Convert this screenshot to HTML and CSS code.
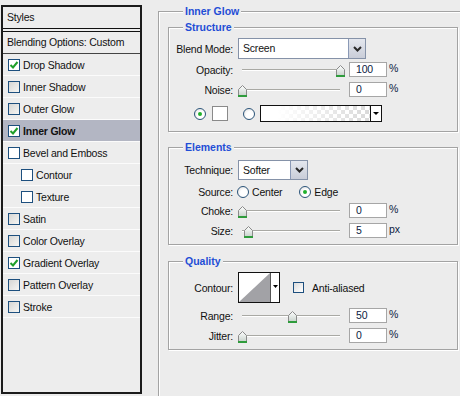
FILE: index.html
```html
<!DOCTYPE html>
<html lang="en">
<head>
    <meta charset="UTF-8">
    <title>Layer Style - Inner Glow</title>
    <link rel="stylesheet" href="styles.css">
</head>
<body>
    <svg width="0" height="0" class="defs">
        <defs>
            <linearGradient id="thumbFill" x1="0" y1="0" x2="0" y2="1">
                <stop offset="0" stop-color="#ffffff"/>
                <stop offset="1" stop-color="#c9d3cd"/>
            </linearGradient>
            <symbol id="thumb" viewBox="0 0 9 12">
                <polygon points="0.5,4.5 4.5,0.5 8.5,4.5 8.5,10.5 0.5,10.5" fill="url(#thumbFill)" stroke="#8a8a8a"/>
                <rect x="0" y="10" width="9" height="2" fill="#2f9c3c"/>
            </symbol>
        </defs>
    </svg>
    <div class="dialog">
        <div class="styles-panel">
            <div class="panel-head">Styles</div>
            <div class="blend-row">Blending Options: Custom</div>
            <ul class="fx-list">
                <li><span class="check on"><svg width="10" height="10" viewBox="0 0 10 10"><path d="M1.5 5 L4 7.5 L8.5 2" fill="none" stroke="#1f9f2a" stroke-width="2"/></svg></span>Drop Shadow</li>
                <li><span class="check dim"></span>Inner Shadow</li>
                <li><span class="check dim"></span>Outer Glow</li>
                <li class="active"><span class="check on"><svg width="10" height="10" viewBox="0 0 10 10"><path d="M1.5 5 L4 7.5 L8.5 2" fill="none" stroke="#1f9f2a" stroke-width="2"/></svg></span>Inner Glow</li>
                <li><span class="check"></span>Bevel and Emboss</li>
                <li class="sub"><span class="check"></span>Contour</li>
                <li class="sub"><span class="check"></span>Texture</li>
                <li><span class="check dim"></span>Satin</li>
                <li><span class="check dim"></span>Color Overlay</li>
                <li><span class="check on"><svg width="10" height="10" viewBox="0 0 10 10"><path d="M1.5 5 L4 7.5 L8.5 2" fill="none" stroke="#1f9f2a" stroke-width="2"/></svg></span>Gradient Overlay</li>
                <li><span class="check dim"></span>Pattern Overlay</li>
                <li><span class="check dim"></span>Stroke</li>
            </ul>
        </div>

        <div class="options">
            <div class="group outer">
                <div class="group-title">Inner Glow</div>

                <div class="group structure">
                    <div class="group-title">Structure</div>
                    <div class="row row-select">
                        <span class="lbl">Blend Mode:</span>
                        <div class="select wide"><span class="select-text">Screen</span><span class="select-btn"><svg width="9" height="6" viewBox="0 0 9 6"><path d="M1 1 L4.5 4.5 L8 1" fill="none" stroke="#2a2a2a" stroke-width="2"/></svg></span></div>
                    </div>
                    <div class="row row-field first">
                        <span class="lbl">Opacity:</span>
                        <div class="slider"><div class="track"></div><svg class="thumb" style="left: 98px"><use href="#thumb"/></svg></div>
                        <span class="num">100</span><span class="unit">%</span>
                    </div>
                    <div class="row row-field">
                        <span class="lbl">Noise:</span>
                        <div class="slider"><div class="track"></div><svg class="thumb" style="left: 0px"><use href="#thumb"/></svg></div>
                        <span class="num">0</span><span class="unit">%</span>
                    </div>
                    <div class="row row-color">
                        <span class="radio on"></span>
                        <span class="swatch"></span>
                        <span class="radio second"></span>
                        <div class="gradient"><span class="gradient-fill"></span><span class="mini-btn"><span class="tri"></span></span></div>
                    </div>
                </div>

                <div class="group elements">
                    <div class="group-title">Elements</div>
                    <div class="row row-select tech">
                        <span class="lbl">Technique:</span>
                        <div class="select narrow"><span class="select-text">Softer</span><span class="select-btn"><svg width="9" height="6" viewBox="0 0 9 6"><path d="M1 1 L4.5 4.5 L8 1" fill="none" stroke="#2a2a2a" stroke-width="2"/></svg></span></div>
                    </div>
                    <div class="row row-source">
                        <span class="lbl">Source:</span>
                        <span class="radio"></span><span class="opt">Center</span>
                        <span class="radio on edge"></span><span class="opt">Edge</span>
                    </div>
                    <div class="row row-field">
                        <span class="lbl">Choke:</span>
                        <div class="slider"><div class="track"></div><svg class="thumb" style="left: 0px"><use href="#thumb"/></svg></div>
                        <span class="num">0</span><span class="unit">%</span>
                    </div>
                    <div class="row row-field">
                        <span class="lbl">Size:</span>
                        <div class="slider"><div class="track"></div><svg class="thumb" style="left: 6px"><use href="#thumb"/></svg></div>
                        <span class="num">5</span><span class="unit">px</span>
                    </div>
                </div>

                <div class="group quality">
                    <div class="group-title">Quality</div>
                    <div class="row row-contour">
                        <span class="lbl">Contour:</span>
                        <div class="contour">
                            <svg width="40" height="29" viewBox="0 0 40 29">
                                <rect x="0" y="0" width="31" height="29" fill="#fff"/>
                                <polygon points="0,29 31,0 31,29" fill="#a2a2a6"/>
                                <line x1="31.5" y1="0" x2="31.5" y2="29" stroke="#555" stroke-width="1"/>
                                <polygon points="34,12 39,12 36.5,15" fill="#000"/>
                            </svg>
                        </div>
                        <span class="check aa"></span><span class="opt">Anti-aliased</span>
                    </div>
                    <div class="row row-field">
                        <span class="lbl">Range:</span>
                        <div class="slider"><div class="track"></div><svg class="thumb" style="left: 50px"><use href="#thumb"/></svg></div>
                        <span class="num">50</span><span class="unit">%</span>
                    </div>
                    <div class="row row-field">
                        <span class="lbl">Jitter:</span>
                        <div class="slider"><div class="track"></div><svg class="thumb" style="left: 0px"><use href="#thumb"/></svg></div>
                        <span class="num">0</span><span class="unit">%</span>
                    </div>
                </div>
            </div>
        </div>
    </div>
</body>
</html>
```

FILE: styles.css
```css
body {
    margin: 0;
    padding: 0;
    background-color: #ececec;
    font-family: "Liberation Sans", Arial, sans-serif;
    font-size: 10.5px;
    letter-spacing: -0.2px;
    color: #111;
    overflow: hidden;
}

.defs {
    position: absolute;
}

.dialog {
    display: flex;
    width: 460px;
    height: 396px;
    overflow: hidden;
}

/* left styles list */

.styles-panel {
    flex: none;
    width: 141px;
    height: 389px;
    margin: 5px 0 0 1px;
    border: 2px solid #1b1b1b;
    box-sizing: border-box;
    background-color: #ededed;
}

.panel-head {
    height: 21px;
    line-height: 21px;
    padding-left: 4px;
    border-bottom: 1px solid #111;
}

.blend-row {
    height: 21px;
    line-height: 21px;
    margin-top: 2px;
    padding-left: 4px;
    border-top: 1px solid #111;
    border-bottom: 1px solid #444;
}

.fx-list {
    list-style: none;
    margin: 0;
    padding: 0;
}

.fx-list li {
    display: flex;
    align-items: center;
    height: 21px;
    padding-left: 5px;
    border-bottom: 1px solid #fbfbfb;
}

.fx-list li.sub {
    padding-left: 18px;
}

.fx-list li.active {
    background-color: #b3b6c3;
    font-weight: bold;
}

.check {
    flex: none;
    display: flex;
    align-items: center;
    justify-content: center;
    width: 12px;
    height: 12px;
    margin-right: 3px;
    border: 1px solid #1d4f7e;
    box-sizing: border-box;
    background-color: #fff;
}

.check.dim {
    background: linear-gradient(135deg, #d6d6d4, #f6f6f4);
}

.check.aa {
    width: 11px;
    height: 11px;
    margin: 0 5px 0 13px;
    background: linear-gradient(135deg, #dcdcdc, #fff);
}

/* right options */

.options {
    flex: none;
    margin: 11px 0 0 16px;
}

.group {
    box-sizing: border-box;
    border: 1px solid #a3a3a3;
    box-shadow: inset 1px 1px 0 #fff, 1px 1px 0 #fff;
}

.group.outer {
    width: 330px;
    height: 420px;
    padding-left: 9px;
}

.group-title {
    display: table;
    margin: -7px 0 0 15px;
    padding: 0 2px;
    line-height: 13px;
    background-color: #ececec;
    color: #1f4ed6;
    font-weight: bold;
    letter-spacing: 0;
}

.structure, .elements, .quality {
    width: 290px;
}

.structure {
    margin-top: 9px;
    padding-bottom: 9px;
}

.elements {
    margin-top: 15px;
    padding-bottom: 6px;
}

.quality {
    margin-top: 16px;
    padding-bottom: 6px;
}

.structure .group-title,
.elements .group-title,
.quality .group-title {
    margin-left: 14px;
}

.row {
    display: flex;
    align-items: center;
    height: 15px;
    margin-top: 5px;
}

.lbl {
    flex: none;
    width: 64px;
    margin-right: 5px;
    text-align: right;
}

.row-select {
    height: 21px;
    margin-top: 4px;
}

.row-field.first {
    margin-top: 3px;
}

.row-color {
    height: 17px;
    margin-top: 8px;
}

.row.tech {
    height: 20px;
    margin-top: 6px;
}

.row-source {
    height: 13px;
}

.row-contour {
    height: 31px;
    margin-top: 4px;
}

/* dropdowns */

.select {
    display: flex;
    height: 100%;
    box-sizing: border-box;
    border: 1px solid #8592a8;
    background-color: #fff;
}

.select.wide {
    width: 128px;
}

.select.narrow {
    width: 70px;
}

.select-text {
    flex: 1;
    padding-left: 4px;
    line-height: 19px;
}

.select-btn {
    flex: none;
    display: flex;
    align-items: center;
    justify-content: center;
    width: 16px;
    border-left: 1px solid #8a99b6;
    background: linear-gradient(#e4e7ee, #c9cdd8);
}

/* sliders and number fields */

.slider {
    position: relative;
    flex: none;
    width: 111px;
    height: 15px;
}

.track {
    width: 98px;
    height: 1px;
    margin: 7px 0 0 4px;
    background-color: #a9a9a4;
    border-bottom: 1px solid #fff;
}

.thumb {
    position: absolute;
    top: 3px;
    width: 9px;
    height: 12px;
}

.num {
    flex: none;
    width: 38px;
    height: 15px;
    box-sizing: border-box;
    padding-left: 6px;
    line-height: 13px;
    border: 1px solid #a6a6a6;
    background-color: #fff;
    color: #0c1b42;
}

.unit {
    margin-left: 2px;
    margin-top: -4px;
    color: #0c1b42;
}

/* radios, swatch, gradient */

.radio {
    flex: none;
    width: 12px;
    height: 12px;
    box-sizing: border-box;
    border: 1px solid #2b5479;
    border-radius: 50%;
    background: radial-gradient(circle at 60% 60%, #fff 40%, #d8d8d8);
    display: flex;
    align-items: center;
    justify-content: center;
}

.radio.on::after {
    content: "";
    width: 4px;
    height: 4px;
    border-radius: 50%;
    background-color: #20b02c;
}

.row-color .radio {
    margin-left: 25px;
}

.row-color .radio.second {
    margin-left: 15px;
}

.swatch {
    flex: none;
    width: 16px;
    height: 15px;
    margin-left: 6px;
    box-sizing: border-box;
    border: 1px solid #8a8a8a;
    background-color: #fff;
}

.gradient {
    flex: none;
    display: flex;
    width: 122px;
    height: 17px;
    margin-left: 5px;
    box-sizing: border-box;
    border: 1px solid #111;
    background-color: #fff;
}

.gradient-fill {
    flex: 1;
    background:
        linear-gradient(to right, #fff 15%, rgba(255, 255, 255, 0) 100%),
        repeating-conic-gradient(#d9d9d9 0 25%, #fff 0 50%) 0 0 / 8px 8px;
}

.mini-btn {
    flex: none;
    display: flex;
    align-items: center;
    justify-content: center;
    width: 10px;
    border-left: 1px solid #111;
    background-color: #fff;
}

.tri {
    width: 0;
    height: 0;
    border-left: 3px solid transparent;
    border-right: 3px solid transparent;
    border-top: 3px solid #000;
}

.row-source .radio {
    margin-left: -1px;
}

.row-source .radio.edge {
    margin-left: 17px;
}

.opt {
    margin-left: 3px;
}

.contour {
    flex: none;
    width: 42px;
    height: 31px;
    box-sizing: border-box;
    border: 1px solid #111;
    background-color: #fff;
}

.contour svg {
    display: block;
}
```
